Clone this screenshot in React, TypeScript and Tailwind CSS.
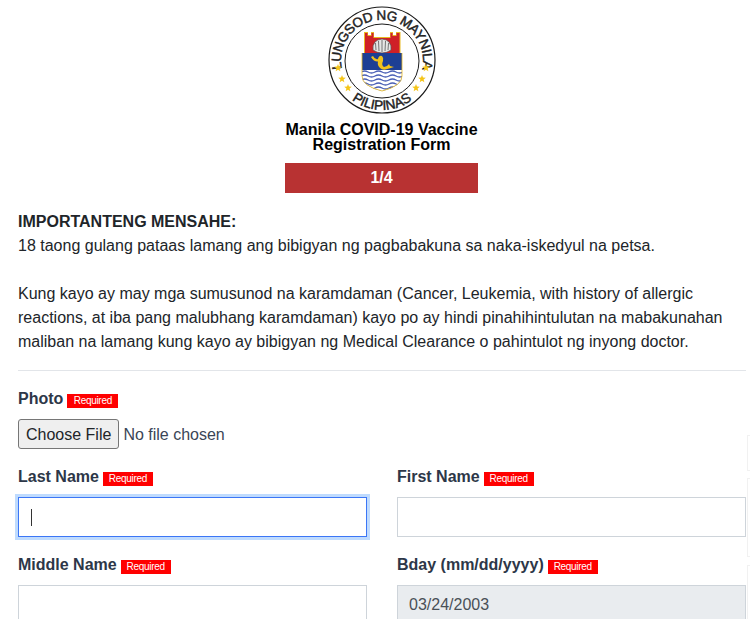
const font = { fontFamily: '"Liberation Sans", Arial, sans-serif' };

function Required({ wide }: { wide?: boolean }) {
  return (
    <span
      className={`${wide ? "w-[51px]" : "w-[50px]"} ml-[4px] inline-block h-[14px] bg-[#ff0000] text-center align-[0px] text-[10px] leading-[14px] font-normal tracking-[-0.3px] text-white`}
    >
      Required
    </span>
  );
}

function Label({ children, wide }: { children: React.ReactNode; wide?: boolean }) {
  return (
    <div className="h-[24px] text-[16px] leading-[26px] font-bold text-[#2d3748]">
      {children}
      <Required wide={wide} />
    </div>
  );
}

function Star({ x, y }: { x: number; y: number }) {
  const pts = [];
  for (let i = 0; i < 10; i++) {
    const r = i % 2 ? 1.7 : 4;
    const a = (Math.PI / 5) * i - Math.PI / 2;
    pts.push(`${x + r * Math.cos(a)},${y + r * Math.sin(a)}`);
  }
  return <polygon points={pts.join(" ")} fill="#f5c518" />;
}

function Logo() {
  return (
    <svg width="110" height="112" viewBox="0 0 110 112" className="block">
      <circle cx="55" cy="56" r="53" fill="#fff" stroke="#1a1a1a" strokeWidth="1.2" />
      <circle cx="55" cy="57" r="37" fill="#fff" stroke="#1a1a1a" strokeWidth="1" />
      <defs>
        <path id="top" d="M 16.5 71 A 41 41 0 1 1 93.5 71" />
        <path id="bot" d="M 5 56 A 50 50 0 0 0 105 56" />
        <clipPath id="shield">
          <path d="M35 49 H75 V72 Q75 82 55 87 Q35 82 35 72 Z" />
        </clipPath>
      </defs>
      <text fontFamily="Liberation Sans" fontSize="13.5" letterSpacing="-0.45" fill="#222" stroke="#222" strokeWidth="0.45">
        <textPath href="#top" startOffset="50%" textAnchor="middle">LUNGSOD NG MAYNILA</textPath>
      </text>
      <text fontFamily="Liberation Sans" fontSize="13.5" fill="#222" stroke="#222" strokeWidth="0.45">
        <textPath href="#bot" startOffset="50%" textAnchor="middle">PILIPINAS</textPath>
      </text>
      <path
        d="M37 50 V28 H41 V31 H44 V28 H47 V33 H63 V28 H66 V31 H69 V28 H73.5 V50 Z"
        fill="#e8b923"
      />
      <path
        d="M38 50 V29 H40.5 V32 H44.5 V29 H46.5 V34 H63.5 V29 H65.5 V32 H69.5 V29 H72.5 V50 Z"
        fill="#cf2027"
      />
      <path d="M46 46 Q45 36 55 35 Q65 36 64 46 Q60 49 55 49 Q50 49 46 46 Z" fill="#e6e6e6" stroke="#555" strokeWidth="0.7" />
      <path d="M49 46 L48.5 39 M52 47 L51.5 37 M55 48 V36 M58 47 L58.5 37 M61 46 L61.5 39" stroke="#555" strokeWidth="0.8" />
      <g clipPath="url(#shield)">
        <rect x="34" y="49" width="42" height="40" fill="#1d3f94" />
        <rect x="34" y="66" width="42" height="24" fill="#fff" />
        <path
          d="M34 68 q3.5 -2 7 0 t7 0 t7 0 t7 0 t7 0 t7 0 M34 72 q3.5 -2 7 0 t7 0 t7 0 t7 0 t7 0 t7 0 M34 76 q3.5 -2 7 0 t7 0 t7 0 t7 0 t7 0 t7 0 M34 80 q3.5 -2 7 0 t7 0 t7 0 t7 0 t7 0 t7 0 M34 84 q3.5 -2 7 0 t7 0 t7 0 t7 0 t7 0 t7 0"
          fill="none"
          stroke="#4a5fb5"
          strokeWidth="1.3"
        />
      </g>
      <path d="M35 49 V72 Q35 82 55 87 Q75 82 75 72 V49" fill="none" stroke="#e8b923" strokeWidth="0.8" />
      <path
        d="M44 53 L46 52 Q48 56 51 55 Q52 51 55 52 Q57 54 56 57 Q54 61 57 63 Q60 63 62 60 L63 62 L67 63 L62 64.5 Q56 67 53 64 Q50 61 51 57.5 Q47 58 44 53 Z"
        fill="#f1c21b"
      />
      <Star x={11} y={64} />
      <Star x={15} y={75} />
      <Star x={21} y={84} />
      <Star x={99} y={64} />
      <Star x={95} y={75} />
      <Star x={89} y={84} />
    </svg>
  );
}

function EdgeBox({ top, height }: { top: string; height: string }) {
  return (
    <div className={`${top} ${height} absolute left-[747px] w-[3px] border-y border-l border-[#f1f1f1]`} />
  );
}

export default function App() {
  return (
    <div className="relative h-[619px] w-[750px] overflow-hidden bg-white pr-[4px] pl-[18px] text-[16px] text-[#212529]" style={font}>
      <div className="flex flex-col items-center pt-[4px] pr-[1px]">
        <Logo />
        <div className="mt-[6px] text-center text-[16px] leading-[15px] font-bold text-black">
          Manila COVID-19 Vaccine
          <br />
          Registration Form
        </div>
        <div className="mt-[11px] h-[30px] w-[193px] bg-[#b83232] text-center text-[16px] leading-[30px] font-bold text-white">
          1/4
        </div>
      </div>

      <div className="mt-[17px] leading-[24px]">
        <div className="font-bold">IMPORTANTENG MENSAHE:</div>
        <div>18 taong gulang pataas lamang ang bibigyan ng pagbabakuna sa naka-iskedyul na petsa.</div>
        <div className="mt-[24px]">
          Kung kayo ay may mga sumusunod na karamdaman (Cancer, Leukemia, with history of allergic reactions, at iba
          pang malubhang karamdaman) kayo po ay hindi pinahihintulutan na mabakunahan maliban na lamang kung kayo ay
          bibigyan ng Medical Clearance o pahintulot ng inyong doctor.
        </div>
      </div>

      <hr className="mt-[16px] border-0 border-t border-[#e2e5e9]" />

      <div className="mt-[15px]">
        <Label wide>Photo</Label>
        <input
          type="file"
          className="mt-[9px] block h-[30px] w-full text-[16px] leading-[30px] text-[#3a4556] file:mr-[4px] file:h-[30px] file:cursor-default file:rounded-[3px] file:border file:border-solid file:border-[#767676] file:bg-[#efefef] file:px-[7px] file:text-[16px] file:font-normal file:text-[#212529]"
        />
      </div>

      <div className="mt-[15px] grid grid-cols-2 gap-x-[30px] gap-y-[15px]">
        <div>
          <Label>Last Name</Label>
          <div className="relative mt-[9px]">
            <input
              type="text"
              readOnly
              className="block h-[40px] w-full border border-[#3b76f6] bg-white px-[12px] shadow-[0_0_0_3px_#bfdbfe] outline-none"
            />
            <span className="absolute top-[12px] left-[13px] h-[17px] w-px bg-[#333]" />
          </div>
        </div>
        <div>
          <Label>First Name</Label>
          <input type="text" readOnly className="mt-[9px] block h-[40px] w-full border border-[#ced4da] bg-white px-[12px] outline-none" />
        </div>
        <div>
          <Label>Middle Name</Label>
          <input type="text" readOnly className="mt-[9px] block h-[40px] w-full border border-[#ced4da] bg-white px-[12px] outline-none" />
        </div>
        <div>
          <Label>Bday (mm/dd/yyyy)</Label>
          <input
            type="text"
            readOnly
            value="03/24/2003"
            className="mt-[9px] block h-[40px] w-full border border-[#ced4da] bg-[#e9ecef] px-[11px] text-[16px] text-[#495057] outline-none"
          />
        </div>
      </div>

      <EdgeBox top="top-[435px]" height="h-[36px]" />
      <EdgeBox top="top-[478px]" height="h-[79px]" />
      <EdgeBox top="top-[565px]" height="h-[80px]" />
    </div>
  );
}
